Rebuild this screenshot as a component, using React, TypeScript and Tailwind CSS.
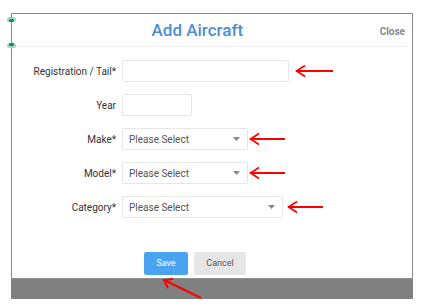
import React from "react";

function Arrow({ w = 38 }: { w?: number }) {
  return (
    <svg width={w} height={14} viewBox={`0 0 ${w} 14`} className="shrink-0">
      <line x1={1} y1={7} x2={w} y2={7} stroke="#ff0000" strokeWidth={1.8} />
      <polyline points="10,1.5 1.5,7 10,12.5" fill="none" stroke="#ff0000" strokeWidth={1.8} strokeLinejoin="miter" />
    </svg>
  );
}

function Caret() {
  return (
    <svg width={7} height={4} viewBox="0 0 7 4" className="shrink-0">
      <polygon points="0,0 7,0 3.5,4" fill="#888" />
    </svg>
  );
}

function Row({ label, children }: { label: string; children: React.ReactNode }) {
  return (
    <div className="flex items-center h-[22px]">
      <div className="w-[104px] text-right text-[10px] text-[#333] whitespace-nowrap">{label}</div>
      <div className="ml-[6px] flex items-center">{children}</div>
    </div>
  );
}

function Select({ w }: { w: string }) {
  return (
    <div className={`${w} h-[22px] border border-[#e6e6e6] rounded-[2px] flex items-center justify-between pl-[6px] pr-[7px]`}>
      <span className="text-[10px] text-[#555]">Please Select</span>
      <Caret />
    </div>
  );
}

export default function App() {
  return (
    <div className="relative w-[426px] h-[306px] bg-white overflow-hidden" style={{ fontFamily: "Roboto, 'Liberation Sans', sans-serif" }}>
      <div className="pl-[11px] pt-[13px]">
        <div className="w-[402px] h-[265px] border-l border-t border-r border-[#8a8a8a] flex flex-col">
          <div className="h-[33px] mr-[6px] border-b border-[#eeeeee] flex items-center">
            <div className="flex-1 text-center text-[17px] font-medium text-[#4a8fd6] leading-none pt-[1px] pl-[3px]">Add Aircraft</div>
            <div className="text-[10px] font-bold text-[#8a8a8a] pr-[1px] pt-[2px]">Close</div>
          </div>
          <div className="pt-[13px] flex flex-col gap-[12px]">
            <Row label="Registration / Tail*">
              <div className="w-[167px] h-[22px] border border-[#e6e6e6] rounded-[2px]" />
              <div className="ml-[6px]"><Arrow w={38} /></div>
            </Row>
            <Row label="Year">
              <div className="w-[70px] h-[22px] border border-[#e6e6e6] rounded-[2px]" />
            </Row>
            <Row label="Make*">
              <Select w="w-[126px]" />
              <div className="ml-[1px]"><Arrow w={36} /></div>
            </Row>
            <Row label="Model*">
              <Select w="w-[126px]" />
              <div className="ml-[1px]"><Arrow w={36} /></div>
            </Row>
            <Row label="Category*">
              <Select w="w-[161px]" />
              <div className="ml-[4px]"><Arrow w={36} /></div>
            </Row>
          </div>
          <div className="mt-[34px] pl-[132px] flex gap-[6px]">
            <button className="w-[44px] h-[23px] bg-[#4aa3ee] rounded-[2px] text-[9px] text-white">Save</button>
            <button className="w-[52px] h-[23px] bg-[#e6e6e6] rounded-[2px] text-[9px] text-[#555]">Cancel</button>
          </div>
        </div>
        <div className="w-[402px] h-[21px] bg-[#808080] border-t border-[#8f8f8f]" />
      </div>

      <div className="absolute left-[7px] top-[17px] w-[9px] h-[5px] rounded-full bg-[#9fd3c3]" />
      <div className="absolute left-[9px] top-[19px] w-[5px] h-[3px] rounded-full bg-[#1f7f6e]" />
      <div className="absolute left-[7px] top-[43px] w-[9px] h-[5px] rounded-full bg-[#9fd3c3]" />
      <div className="absolute left-[9px] top-[43px] w-[5px] h-[3px] rounded-full bg-[#1f7f6e]" />

      <svg className="absolute left-[160px] top-[276px]" width={44} height={26} viewBox="0 0 44 26">
        <line x1={4} y1={4} x2={41} y2={22} stroke="#ff0000" strokeWidth={2} />
        <polyline points="13,3 4,4 8,12" fill="none" stroke="#ff0000" strokeWidth={2} />
      </svg>
    </div>
  );
}
